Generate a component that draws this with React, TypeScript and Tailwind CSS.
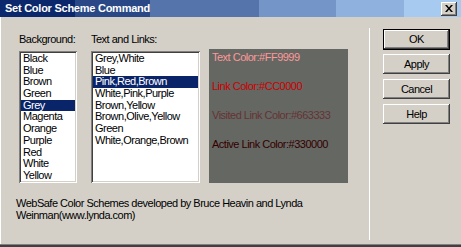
const backgrounds = ['Black', 'Blue', 'Brown', 'Green', 'Grey', 'Magenta', 'Orange', 'Purple', 'Red', 'White', 'Yellow'];
const schemes = [
  'Grey,White',
  'Blue',
  'Pink,Red,Brown',
  'White,Pink,Purple',
  'Brown,Yellow',
  'Brown,Olive,Yellow',
  'Green',
  'White,Orange,Brown',
];

const font = "font-['Liberation_Sans',Arial,sans-serif]";
const raised =
  'shadow-[inset_-1px_-1px_0_#404040,inset_1px_1px_0_#ffffff,inset_-2px_-2px_0_#808080,inset_2px_2px_0_#d4d0c8]';
const sunken =
  'shadow-[inset_1px_1px_0_#808080,inset_-1px_-1px_0_#ffffff,inset_2px_2px_0_#404040,inset_-2px_-2px_0_#d4d0c8]';

function ListBox({ items, selected, width }: { items: string[]; selected: string; width: string }) {
  return (
    <div className={`${width} h-[132px] bg-white ${sunken} p-[2px] overflow-hidden`}>
      {items.map((item) => (
        <div
          key={item}
          className={`h-[11.7px] leading-[11.7px] pl-[2px] whitespace-nowrap ${
            item === selected ? 'bg-[#0a246a] text-white' : 'text-black'
          }`}
        >
          {item}
        </div>
      ))}
    </div>
  );
}

function Button({ label, isDefault }: { label: string; isDefault?: boolean }) {
  return (
    <div
      className={`w-[67px] flex items-center justify-center text-black bg-[#d4d0c8] ${
        isDefault ? 'h-[21px] border border-black' : `h-[20px] ${raised}`
      }`}
    >
      {isDefault ? (
        <div className={`w-full h-full flex items-center justify-center ${raised}`}>{label}</div>
      ) : (
        label
      )}
    </div>
  );
}

export default function App() {
  return (
    <div
      className={`w-[461px] h-[247px] bg-[#d4d0c8] flex flex-col text-[11px] tracking-[-0.5px] ${font} overflow-hidden`}
    >
      {/* Title bar */}
      <div className="h-[17px] shrink-0 flex items-center justify-between pl-[5px] pr-[4px] bg-[linear-gradient(to_right,#0c286c_0px,#0c286c_75px,#2a4886_75px,#2a4886_150px,#5674ac_150px,#5674ac_259px,#7495c8_259px,#7495c8_336px,#8fb1dd_336px,#8fb1dd_404px,#a6caf0_404px)]">
        <span className="text-white font-bold text-[11px] tracking-[-0.25px]">Set Color Scheme Command</span>
        <div className={`w-[16px] h-[14px] bg-[#d4d0c8] ${raised} flex items-center justify-center`}>
          <svg width="8" height="7" viewBox="0 0 8 7">
            <path d="M0 0h2l2 2.5L6 0h2L5 3.5 8 7H6L4 4.5 2 7H0l3-3.5z" fill="#000" />
          </svg>
        </div>
      </div>

      {/* Body */}
      <div className="flex-1 flex border-l border-white">
        {/* Left section */}
        <div className="w-[368px] shrink-0 pl-[18px] pt-[16px]">
          <div className="flex items-end">
            <div className="w-[58px] shrink-0 flex flex-col">
              <div className="h-[12px] leading-[12px] text-black whitespace-nowrap">Background:</div>
              <div className="mt-[6px]">
                <ListBox items={backgrounds} selected="Grey" width="w-[58px]" />
              </div>
            </div>
            <div className="w-[109px] shrink-0 flex flex-col ml-[14px]">
              <div className="h-[12px] leading-[12px] text-black whitespace-nowrap">Text and Links:</div>
              <div className="mt-[6px]">
                <ListBox items={schemes} selected="Pink,Red,Brown" width="w-[109px]" />
              </div>
            </div>
            <div className="ml-[9px] w-[139px] shrink-0 h-[134px] bg-[#656763] pl-[3px] pt-[2px] flex flex-col gap-[17px] leading-[12px] whitespace-nowrap">
              <div className="text-[#ff9999]">Text Color:#FF9999</div>
              <div className="text-[#cc0000]">Link Color:#CC0000</div>
              <div className="text-[#663333]">Visited Link Color:#663333</div>
              <div className="text-[#330000]">Active Link Color:#330000</div>
            </div>
          </div>
          <div className="mt-[15px] -ml-[3px] leading-[11.5px] text-black whitespace-nowrap">
            WebSafe Color Schemes developed by Bruce Heavin and Lynda
            <br />
            Weinman(www.lynda.com)
          </div>
        </div>

        {/* Separator */}
        <div className="mt-[11px] h-[212px] w-px bg-white" />

        {/* Buttons */}
        <div className="pl-[13px] pt-[12px] flex flex-col">
          <Button label="OK" isDefault />
          <div className="mt-[4px]">
            <Button label="Apply" />
          </div>
          <div className="mt-[5px]">
            <Button label="Cancel" />
          </div>
          <div className="mt-[5px]">
            <Button label="Help" />
          </div>
        </div>
      </div>

      {/* Bottom frame */}
      <div className="h-px shrink-0 bg-[#808080]" />
      <div className="h-[2px] shrink-0 bg-[#404040]" />
    </div>
  );
}
